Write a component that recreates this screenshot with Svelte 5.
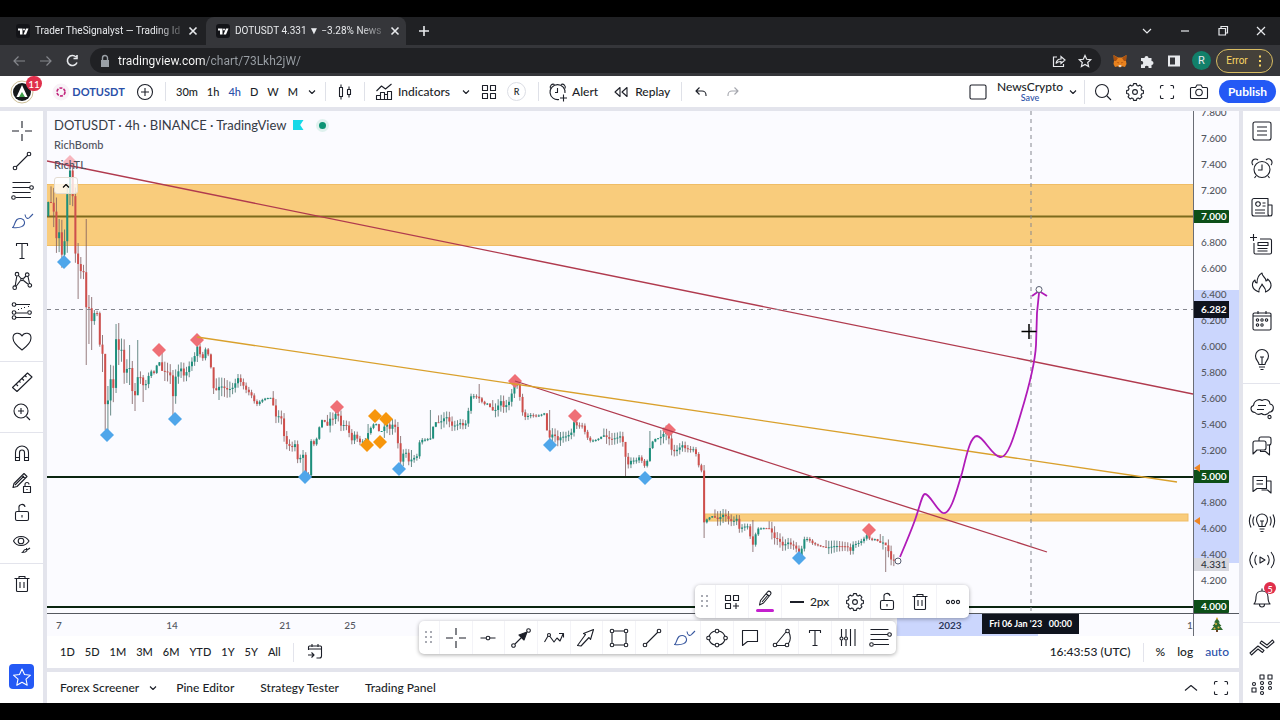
<script lang="ts">
  type Range = { label: string; active?: boolean };
  type Marker = { x: number; y: number; kind: "high" | "low" | "bomb" | "faded" };

  const ring = (x: number, y: number, r = 1.8) =>
    `M${x - r} ${y}a${r} ${r} 0 1 0 ${2 * r} 0a${r} ${r} 0 1 0 ${-2 * r} 0`;

  // Eight-toothed cog centred on the 28 x 28 icon grid.
  const cog = () => {
    const points: string[] = [];
    for (let tooth = 0; tooth < 8; tooth++) {
      for (const [offset, radius] of [[-0.28, 6.8], [-0.17, 8.5], [0.17, 8.5], [0.28, 6.8]]) {
        const angle = (tooth * Math.PI) / 4 + offset;
        points.push(`${(14 + radius * Math.cos(angle)).toFixed(2)} ${(14 + radius * Math.sin(angle)).toFixed(2)}`);
      }
    }
    return `M${points.join("L")}z`;
  };

  const icons: Record<string, string> = {
    cross: "M14 4v7M14 17v7M4 14h7M17 14h7",
    trend: "M8.5 19.5l11-11" + ring(7, 21) + ring(21, 7),
    fib: "M4.5 5.5h18M4.5 10.5h17M4.5 15.5h18M8 20.5h15" + ring(23.5, 10.5) + ring(5.5, 20.5),
    brush: "M4.5 20.5c2-.5 1.5-5 4.5-8 3-2 7-1 7.5 2.5.5 4-4 6.5-12 5.5zM17 7.5c.5 4 3 5 5 2.5l3-3",
    text: "M8.5 9V6.5h11V9M14 6.5v15M11.5 21.5h5",
    pattern:
      "M8.8 9L7.2 19M10.5 8.5l2.5 3M15.5 11.5l2.5-2.5M20 9.5l1.5 7M15.5 13.5l5 4M12.5 13.5L8 19.5" +
      ring(9, 7.2) + ring(19.2, 7.7) + ring(6.7, 20.7) + ring(21.8, 18.3) + ring(14, 12.5, 1.2),
    forecast:
      "M8 7.5h14M8 16h11M8 20.5h15M10 12.5h1M13 11.5h1M16 10.5h1M20 9.5h1" +
      ring(6, 7.5) + ring(6, 15.5) + ring(6, 20.5) + ring(21.5, 15.5),
    heart: "M14 23C10 20 5 15.5 5 11c0-6 7-6 9-2 2-4 9-4 9 2 0 4.5-5 9-9 12z",
    ruler: "M4.5 19.5l15-14.5 4.5 4-15 14.5zM8 16l2 2M11 13l1.5 1.5M14 10.5l2 2M17 7.5l1.5 1.5",
    zoom: ring(13, 13, 7) + "M18.5 18.5l3.5 3.5M13 10v6M10 13h6",
    magnet: "M7.5 21.5v-8a6.5 6.5 0 0 1 13 0v8h-4v-8a2.5 2.5 0 0 0-5 0v8zM7.5 18.5h4M16.5 18.5h4",
    pencilLock:
      "M5 18.5l1-4L16 4.5l3 3L9 17.5zM14 6.5l3 3M7 16l9-9M15.5 17.5h7v6h-7zM17 17.5v-2a2 2 0 0 1 4 0M19 20v1",
    lock: "M9 12.5h10a1.5 1.5 0 0 1 1.5 1.5v6a1.5 1.5 0 0 1-1.5 1.5H9A1.5 1.5 0 0 1 7.5 20v-6A1.5 1.5 0 0 1 9 12.5zM11 12.5V9a3 3 0 0 1 6-1M14 16v2.5",
    eye: "M5.5 12c3-6 12-6 15.5 0-3.5 6-12.5 6-15.5 0z" + ring(13, 12, 2.8) + "M14 23.5c2 0 1-3 3.5-3s2 3-3.5 3zM18.5 19c0 2 1 2 3.5 0",
    trash: "M6.5 8.5h15M11 8.5v-2h6v2M8.5 8.5v12a1 1 0 0 0 1 1h9a1 1 0 0 0 1-1v-12M12 12v6M16 12v6",
    star: "M14 6l2.5 5.5 6 .7-4.5 4 1.2 6-5.2-3-5.2 3 1.2-6-4.5-4 6-.7z",
    horizontal: "M6.5 14h5.5M16 14h5.5" + ring(14, 14),
    arrowLine: "M8 20l7-7" + ring(6.5, 21.5) + ring(21.5, 6.5),
    path: "M4.5 18l3.5-6M10 12.5l4 5.5 3-4 3 3 3-7M19 9.5h4.5v4" + ring(9, 11, 1.5),
    arrow: "M5.5 21.5l8-11-2-1 10-4-3 10-1.5-2-8 8.5z",
    rect: "M9 7h10M9 21h10M7 9v10M21 9v10" + ring(7, 7) + ring(21, 7) + ring(7, 21) + ring(21, 21),
    ellipse:
      "M6 12.5C7 9.5 9.5 7.5 12 7M16 7c2.5.5 5 2.5 6 5.5M22 15.5c-1 3-3.5 5-6 5.5M12 21c-2.5-.5-5-2.5-6-5.5" +
      ring(14, 7) + ring(14, 21) + ring(5.5, 14) + ring(22.5, 14),
    callout: "M6.5 6.5h15v11h-10l-5 4z",
    arc: "M8.5 19.5L18 8M8.5 21.5h9M21 8.5c2 4 1.5 8-.5 11" + ring(7, 21) + ring(19.5, 7) + ring(19, 21),
    bars: "M7.5 5v8M7.5 16v6M12 5v8M12 16v6M16.5 5v17M21 5v17" + ring(7.5, 14.5, 1.5) + ring(12, 14.5, 1.5),
    templates: "M7.5 7.5h5v5h-5zM15.5 7.5h5v5h-5zM7.5 15.5h5v5h-5zM18 15v6M15 18h6",
    pencil: "M8.5 20l1-4.5 7-8.5a1.5 1.5 0 0 1 3 2.5l-7 8.5zM15 8.5l3 2.5M11 17l6-7",
    gear: cog() + ring(14, 14, 2.4),
    dots: ring(9, 14, 1.6) + ring(14, 14, 1.6) + ring(19, 14, 1.6),
    down: "M11 12.5l3 3 3-3",
    up: "M8 16.5l6-5 6 5",
    upSmall: "M11 15.5l3-3 3 3",
    plusCircle: ring(14, 14, 7.5) + "M14 10v8M10 14h8",
    candles: "M8.5 9.5h3v9h-3zM10 6.5v3M10 18.5v3M16.5 11.5h3v5h-3zM18 8.5v3M18 16.5v3",
    indicators: "M6.5 13l5-5 4 3 6-5M6.5 21.5v-4h4v-3h4v2h3v-3h4v8zM10.5 17.5v4M14.5 16.5v5M17.5 16.5v5",
    grid: "M7.5 7.5h5v5h-5zM15.5 7.5h5v5h-5zM7.5 15.5h5v5h-5zM15.5 15.5h5v5h-5z",
    alertAdd: "M15 21.5A7.5 7.5 0 1 1 21 15M13.5 10v4.5H11M6.5 10.5a3 3 0 0 1 4-4M17 6.5a3 3 0 0 1 4 4M19.5 16.5v7M16 20h7",
    replay: "M13 9.5v9l-5-4.5zM20 9.5v9l-5-4.5z",
    undo: "M12.5 9.5L9 13l3.5 3.5M9 13h6a4 4 0 0 1 4 4v1",
    redo: "M15.5 9.5L19 13l-3.5 3.5M19 13h-6a4 4 0 0 0-4 4v1",
    layout: "M7.5 7h13A1.5 1.5 0 0 1 22 8.5v11a1.5 1.5 0 0 1-1.5 1.5h-13A1.5 1.5 0 0 1 6 19.5v-11A1.5 1.5 0 0 1 7.5 7z",
    search: ring(13, 13, 6.5) + "M18 18l4 4",
    full: "M10.5 7.5h-2a1 1 0 0 0-1 1v2M17.5 7.5h2a1 1 0 0 1 1 1v2M10.5 20.5h-2a1 1 0 0 1-1-1v-2M17.5 20.5h2a1 1 0 0 0 1-1v-2",
    camera: "M6.5 9.5h4l1.5-2.5h4l1.5 2.5h4a1 1 0 0 1 1 1v9a1 1 0 0 1-1 1h-15a1 1 0 0 1-1-1v-9a1 1 0 0 1 1-1z" + ring(14, 14.5, 3.3),
    goto: "M7.5 12V9a1 1 0 0 1 1-1h11a1 1 0 0 1 1 1v9a2 2 0 0 1-2 2h-3M7.5 11h13M11 6v3M17 6v3M7 17h6M10.5 14.5l2.5 2.5-2.5 2.5",
    watchlist: "M7 5h14a2 2 0 0 1 2 2v14a2 2 0 0 1-2 2H7a2 2 0 0 1-2-2V7a2 2 0 0 1 2-2zM9 10h10M9 14h10M9 18h10",
    alarm: ring(14, 14.5, 8) + "M14 9.5v5.5h-4M5 10a3.5 3.5 0 0 1 5-5M18 5a3.5 3.5 0 0 1 5 5M8 21l-1.5 2M20 21l1.5 2",
    news: "M6 5.5h14v15.5a2 2 0 0 0 2 2H6a2 2 0 0 1-2-2V7.5a2 2 0 0 1 2-2zM20 12h4v9a2 2 0 0 1-4 0M14.5 10h3M14.5 13h3M7 17h10M7 20h10" + ring(10, 11, 2.3),
    listAdd: "M12 8h10a1.5 1.5 0 0 1 1.5 1.5v12A1.5 1.5 0 0 1 22 23H7.5A1.5 1.5 0 0 1 6 21.5V12M5.5 3v7M2 6.5h7M10 11.5h10v3H10zM9.5 17.5h10M9.5 20h10",
    flame: "M11 23c-9-3-7-10-4-12 0 2 1 3 2 3 0-5 1-8 5-10 0 4 4 4 4 8 1 0 1.5-1 1.5-2 5 4 5 10-2 13 1-4-2-4-3.5-8-.5 3-4 4-3 8z",
    calendar:
      "M6.5 6h15A1.5 1.5 0 0 1 23 7.5v14a1.5 1.5 0 0 1-1.5 1.5h-15A1.5 1.5 0 0 1 5 21.5v-14A1.5 1.5 0 0 1 6.5 6zM5 9h18M10 4v3M18 4v3" +
      ring(9.5, 13, 1.2) + ring(14, 13, 1.2) + ring(18.5, 13, 1.2) + ring(9.5, 18, 1.2) + ring(14, 18, 1.2),
    bulb: "M11 19.5c0-3-3.5-4-3.5-8.5a6.5 6.5 0 0 1 13 0c0 4.5-3.5 5.5-3.5 8.5zM11 22h6M12.5 24.5h3M14 12v7M12 12h4",
    cloud: "M7 18.5c-5-.5-5-6-1.500-7C6 6.500 11 4.500 14 6.500c4-2.500 8 0 8 3.500 5 1 4 8-.5 8-2 3-6 3.500-8 1.500-2 1-5 1-6.500-1zM10 11.500h8M9 15.500h7" + ring(21.5, 23, 1.6),
    chats: "M5 11a2 2 0 0 1 2-2h9a2 2 0 0 1 2 2v5a2 2 0 0 1-2 2h-7l-4 4zM11 9V7a2 2 0 0 1 2-2h8a2 2 0 0 1 2 2v4a2 2 0 0 1-2 2h-2M21.5 13v10l-4-3.5h-5v-1.5",
    comments: "M5 6.5h13.5v12H9l-4 3zM18.5 11h4.5v12l-3.5-3h-6M8.5 10.5h6.5M8.5 14h6.5",
    ideas:
      "M11 18.5c0-2-2.5-3-2.5-7a5.5 5.5 0 0 1 11 0c0 4-2.5 5-2.5 7zM11.5 21h5M12.5 23.5h3M14 13v5M12 13h4M6 8.5c-1.5 3-1.5 6 0 9M3 6.5c-2 4-2 9 0 13M22 8.5c1.5 3 1.5 6 0 9M25 6.5c2 4 2 9 0 13",
    stream: "M12 11v6l5-3zM8.5 9c-2 3-2 7 0 10M5 6c-4 5-4 11 0 16M19.5 9c2 3 2 7 0 10M23 6c4 5 4 11 0 16",
    bell: "M6 20c2-2 2-4 2-7 0-8 12-8 12 0 0 3 0 5 2 7zM11.5 20.5a2.500 2.500 0 0 0 5 0M14 7V4.500",
    order: "M2 19l8-7 6 4.500-1.500 2-4.500-3.500-6.500 6zM12 9l1.500-2 5.500 4 5.500-5 1.500 2-7 6z",
    panel:
      "M12 5h4v4h-4zM20 5h4v4h-4zM4 18h4v4H4z" + ring(14, 13, 1.5) + ring(22, 13, 1.5) + ring(6, 14, 1.5) + ring(14, 18, 1.5) + ring(22, 18, 1.5) + ring(14, 23, 1.5),
  };

  const leftTools = [
    [["cross", "Cross"], ["trend", "Trend line"], ["fib", "Fib retracement"], ["brush", "Brush"], ["text", "Text"], ["pattern", "XABCD pattern"], ["forecast", "Long position"], ["heart", "Icons"]],
    [["ruler", "Measure"], ["zoom", "Zoom in"]],
    [["magnet", "Magnet mode"], ["pencilLock", "Stay in drawing mode"], ["lock", "Lock all drawings"], ["eye", "Hide all drawings"]],
    [["trash", "Remove drawings"]],
  ];
  const rightTools = [
    [["watchlist", "Watchlist"], ["alarm", "Alerts"], ["news", "News"], ["listAdd", "Data window"], ["flame", "Hotlists"], ["calendar", "Calendar"], ["bulb", "My ideas"]],
    [["cloud", "Minds"], ["chats", "Public chats"], ["comments", "Private chats"], ["ideas", "Ideas stream"], ["stream", "Streams"], ["bell", "Notifications"]],
    [["order", "Order panel"], ["panel", "DOM"]],
  ];
  const favorites = ["cross", "horizontal", "arrowLine", "path", "arrow", "rect", "trend", "brush", "ellipse", "callout", "arc", "text", "bars", "fib"];

  const intervals: Range[] = [
    { label: "30m" },
    { label: "1h" },
    { label: "4h", active: true },
    { label: "D" },
    { label: "W" },
    { label: "M" },
  ];
  const ranges = ["1D", "5D", "1M", "3M", "6M", "YTD", "1Y", "5Y", "All"];
  const prices = Array.from({ length: 20 }, (_, i) => (7.8 - i * 0.2).toFixed(3));
  const levels = ["7.000", "5.000", "4.000"];

  // Plot space: x runs 47..1193, y runs 111..613.
  const plotLeft = 47;
  const plotWidth = 1146;
  const dates = [
    { label: "7", x: 59 },
    { label: "14", x: 172 },
    { label: "21", x: 285 },
    { label: "25", x: 350 },
    { label: "2023", x: 950 },
    { label: "1", x: 1190 },
  ];

  const closes = `48,202 51,203 54,213 56,240 59,232 62,257 65,240 67,198 70,172 73,201 75,250 78,262 81,270
    84,271 87,318 89,307 92,322 95,310 98,314 100,348 103,355 106,422 108,400 111,377 114,392 116,340 119,352
    122,351 125,383 127,370 130,370 133,395 136,393 138,373 141,377 144,387 146,383 149,374 152,370 155,374
    157,364 160,362 163,375 166,370 168,374 171,377 174,408 176,372 179,373 182,369 185,383 187,366 190,364
    193,358 195,354 198,343 201,358 204,357 206,346 209,357 212,373 214,392 217,390 220,386 223,388 228,391
    233,389 238,380 241,380 246,388 251,393 256,404 261,400 266,398 272,398 275,417 281,417 284,437 287,446
    292,449 295,446 298,459 303,453 306,475 309,474 311,440 315,445 320,424 323,418 327,427 331,417 333,420
    337,412 341,427 346,426 351,440 355,432 359,441 365,440 369,430 373,424 377,424 380,435 383,428 387,425
    390,430 394,423 397,436 400,465 403,456 405,452 408,460 413,457 417,455 420,439 426,439 431,438 434,422
    440,423 446,417 452,427 456,427 462,424 467,421 470,395 473,395 478,396 484,404 487,403 493,411 497,410
    500,400 504,409 510,402 513,390 515,385 519,388 521,405 524,416 530,414 535,415 540,415 545,413 548,440
    551,436 554,434 557,442 561,438 567,438 572,434 573,419 577,424 582,424 585,431 589,440 595,440 600,438
    603,435 610,440 617,439 622,437 624,453 627,464 631,459 637,459 640,455 643,463 646,467 648,456 651,443
    655,439 660,438 665,433 668,431 670,450 675,453 680,449 684,446 690,448 695,448 698,463 702,471 704,522
    708,518 713,516 717,520 720,518 724,515 728,520 733,524 736,519 739,527 744,525 748,525 751,539 753,544
    755,535 758,528 765,528 771,529 773,538 778,540 783,547 788,544 793,548 796,546 799,555 801,552 803,538
    808,538 813,543 820,546 827,548 835,547 845,548 850,550 853,543 858,542 863,539 868,533 870,540 875,539
    880,543 884,543 888,550 890,560 894,562 896,564`
    .trim()
    .split(/\s+/)
    .map((pair) => pair.split(",").map(Number));

  // Candles whose wick is far longer than the usual one: index -> [high, low].
  const wicks: Record<number, [number, number]> = {
    8: [162, 205], 11: [243, 299], 14: [219, 365], 15: [295, 344], 16: [297, 350], 20: [335, 372],
    21: [355, 430], 22: [386, 432], 25: [324, 393], 26: [323, 365], 33: [340, 393], 30: [345, 385],
    31: [361, 404], 32: [383, 411], 35: [375, 402], 46: [370, 417], 55: [337, 362], 61: [370, 394],
    94: [450, 477], 106: [407, 424], 118: [424, 447], 130: [436, 470], 134: [450, 467], 141: [410, 440],
    159: [384, 403], 185: [410, 444], 213: [450, 476], 222: [431, 462], 242: [465, 538], 260: [520, 552],
    309: [547, 572],
  };

  const step = 2.71;
  const sample = (x: number) => {
    const next = closes.findIndex(([px]) => px >= x);
    if (next <= 0) return closes[next < 0 ? closes.length - 1 : 0][1];
    const [x0, y0] = closes[next - 1];
    const [x1, y1] = closes[next];
    return y0 + ((y1 - y0) * (x - x0)) / (x1 - x0);
  };
  const noise = (i: number) => (((i * 7919 + 13) * 104729) % 1000) / 1000;

  const candles = Array.from({ length: 313 }, (_, i) => {
    const x = 48.3 + i * step;
    const close = sample(x) + (noise(i) - 0.5) * 4;
    const open = i ? sample(x - step) + (noise(i - 1) - 0.5) * 4 : 216;
    const reach = x < 150 ? 16 : x < 230 ? 10 : 7;
    const top = Math.min(open, close);
    const bottom = Math.max(open, close);
    const [high, low] = wicks[i] ?? [top - noise(i + 50) * reach, bottom + noise(i + 90) * reach];
    return { x, top, height: Math.max(bottom - top, 1), high, low, rising: close < open };
  });

  const markers: Marker[] = [
    { x: 70, y: 162, kind: "faded" },
    { x: 64, y: 262, kind: "low" },
    { x: 107, y: 435, kind: "low" },
    { x: 159, y: 350, kind: "high" },
    { x: 175, y: 419, kind: "low" },
    { x: 197, y: 340, kind: "high" },
    { x: 305, y: 477, kind: "low" },
    { x: 337, y: 407, kind: "high" },
    { x: 367, y: 445, kind: "bomb" },
    { x: 375, y: 416, kind: "bomb" },
    { x: 380, y: 442, kind: "bomb" },
    { x: 386, y: 419, kind: "bomb" },
    { x: 399, y: 469, kind: "low" },
    { x: 515, y: 381, kind: "high" },
    { x: 550, y: 445, kind: "low" },
    { x: 575, y: 416, kind: "high" },
    { x: 645, y: 478, kind: "low" },
    { x: 669, y: 430, kind: "high" },
    { x: 799, y: 558, kind: "low" },
    { x: 869, y: 530, kind: "high" },
  ];
</script>

{#snippet icon(name: string)}
  <svg class="icon" viewBox="0 0 28 28" aria-hidden="true">
    <path d={icons[name]}></path>
    {#if name === "arrowLine"}<path class="solid" d="M20 8l-3 8-5-5z"></path>{/if}
  </svg>
{/snippet}

{#snippet favicon()}
  <svg class="favicon" viewBox="0 0 14 14" aria-hidden="true">
    <rect width="14" height="14" rx="3"></rect>
    <path d="M2 4.5h4.5v6h-2.5v-4H2zM10 4.5h2.5l-2.5 6H7.5z"></path>
    <circle cx="8" cy="5.5" r="1"></circle>
  </svg>
{/snippet}

{#snippet closeTab()}
  <button type="button" class="close" aria-label="Close tab">
    <svg viewBox="0 0 16 16"><path class="bold" d="M4.5 4.5l7 7M11.5 4.5l-7 7"></path></svg>
  </button>
{/snippet}

<div class="window">
  <header class="browser">
    <div class="tabs">
      <div class="tab">
        {@render favicon()}
        <span class="tab-title">Trader TheSignalyst — Trading Id</span>
        {@render closeTab()}
      </div>
      <div class="tab current">
        {@render favicon()}
        <span class="tab-title">DOTUSDT 4.331 ▼ −3.28% News</span>
        {@render closeTab()}
      </div>
      <button type="button" class="chrome-btn" aria-label="New tab">
        <svg viewBox="0 0 16 16"><path class="bold" d="M8 3v10M3 8h10"></path></svg>
      </button>
      <div class="window-controls">
        <button type="button" aria-label="Search tabs"><svg viewBox="0 0 16 16"><path d="M4 6l4 4 4-4"></path></svg></button>
        <button type="button" aria-label="Minimize"><svg viewBox="0 0 16 16"><path d="M4 8h8"></path></svg></button>
        <button type="button" aria-label="Restore"><svg viewBox="0 0 16 16"><path d="M4 5.5h6.5V12H4zM6 5.5v-2h6.5V10h-2"></path></svg></button>
        <button type="button" aria-label="Close"><svg viewBox="0 0 16 16"><path d="M4 4l8 8M12 4l-8 8"></path></svg></button>
      </div>
    </div>
    <div class="address">
      <button type="button" class="nav dim" aria-label="Back"><svg viewBox="0 0 16 16"><path d="M14 8H3M7.5 3.5L3 8l4.5 4.5"></path></svg></button>
      <button type="button" class="nav dim" aria-label="Forward"><svg viewBox="0 0 16 16"><path d="M2 8h11M8.5 3.5L13 8l-4.5 4.5"></path></svg></button>
      <button type="button" class="nav" aria-label="Reload"><svg viewBox="0 0 16 16"><path class="bold" d="M12 9.5a5 5 0 1 1-1-5.5M12 2v3.5H8.5"></path></svg></button>
      <div class="omnibox">
        <svg class="padlock" viewBox="0 0 16 16" aria-hidden="true"><path d="M4 7h8v7H4z"></path><path class="shackle" d="M5.5 7V5a2.5 2.5 0 0 1 5 0v2"></path></svg>
        <input type="text" aria-label="Address" value="tradingview.com/chart/73Lkh2jW/" />
        <button type="button" aria-label="Share"><svg viewBox="0 0 16 16"><path d="M6 4H2.5v9.5h10V11M5 10.5c.5-3 2.5-4.5 5-4.5V3.5L14 7l-4 3.5V8.5c-2 0-4 .5-5 2z"></path></svg></button>
        <button type="button" aria-label="Bookmark"><svg viewBox="0 0 16 16"><path d="M8 2.5l1.7 3.8 4 .4-3 2.8.9 4L8 11.4l-3.6 2.1.9-4-3-2.8 4-.4z"></path></svg></button>
      </div>
      <button type="button" class="ext" aria-label="Wallet extension">
        <svg viewBox="0 0 16 16">
          <path class="fox" d="M1.5 2l4.5 2.5h4L14.5 2l-.5 6 .5 3-1.5 3-3-.8-1 1H7l-1-1-3 .8L1.5 11 2 8z"></path>
          <path class="fox-dark" d="M1.5 2L6 5 4 8H2zM14.5 2L10 5l2 3h2zM4.5 9l2.5.5-.5 1zM11.5 9L9 9.5l.5 1z"></path>
          <path class="fox-chin" d="M6.5 12h3L9 14H7z"></path>
        </svg>
      </button>
      <button type="button" class="ext" aria-label="Extensions">
        <svg viewBox="0 0 16 16"><path class="fill" d="M2 5h3.5a2 2 0 1 1 4 0H12.5v3a2 2 0 1 1 0 4v3H9.5a1.8 1.8 0 1 0-3.5 0H2v-3.5a1.8 1.8 0 1 0 0-3.5z"></path></svg>
      </button>
      <button type="button" class="ext" aria-label="Side panel">
        <svg viewBox="0 0 16 16"><path class="fill" d="M2 2.5h12v11H2zM4 4.5v7h5v-7z"></path></svg>
      </button>
      <button type="button" class="profile" aria-label="Profile">R</button>
      <button type="button" class="error">Error
        <svg viewBox="0 0 16 16" aria-hidden="true"><path class="fill" d="M7 2.5h2v2H7zM7 7h2v2H7zM7 11.5h2v2H7z"></path></svg>
      </button>
    </div>
  </header>

  <div class="topbar">
    <button type="button" class="account" aria-label="Account">
      <svg viewBox="0 0 26 26" aria-hidden="true">
        <circle class="outer" cx="13" cy="13" r="11"></circle>
        <circle class="inner" cx="13" cy="13" r="9"></circle>
        <path class="peak" d="M13 6l5.5 12h-11z"></path>
        <path class="green" d="M13 13l3 5h-6z"></path>
      </svg>
      <span class="badge">11</span>
    </button>
    <div class="group symbol">
      <svg class="dot-logo" viewBox="0 0 18 18" aria-hidden="true"><circle class="halo" cx="9" cy="9" r="8.5"></circle><circle class="orbit" cx="9" cy="9" r="4"></circle></svg>
      <button type="button" class="ticker">DOTUSDT</button>
      <button type="button" aria-label="Compare">{@render icon("plusCircle")}</button>
    </div>
    <div class="group intervals">
      {#each intervals as interval (interval.label)}
        <button type="button" class:active={interval.active}>{interval.label}</button>
      {/each}
      <button type="button" class="slim" aria-label="More intervals">{@render icon("down")}</button>
    </div>
    <div class="group style">
      <button type="button" aria-label="Candles">{@render icon("candles")}</button>
    </div>
    <div class="group indicators">
      <button type="button">{@render icon("indicators")}Indicators</button>
      <button type="button" class="slim" aria-label="Favorite indicators">{@render icon("down")}</button>
      <button type="button" aria-label="Templates">{@render icon("grid")}</button>
      <button type="button" class="round">R</button>
    </div>
    <div class="group alert">
      <button type="button">{@render icon("alertAdd")}Alert</button>
      <button type="button">{@render icon("replay")}Replay</button>
    </div>
    <div class="history">
      <button type="button" aria-label="Undo">{@render icon("undo")}</button>
      <button type="button" aria-label="Redo" disabled>{@render icon("redo")}</button>
    </div>
    <div class="group layout">
      <button type="button" aria-label="Select layout">{@render icon("layout")}</button>
      <button type="button" class="layout-name">NewsCrypto<small>Save</small></button>
      <button type="button" class="slim" aria-label="Manage layouts">{@render icon("down")}</button>
    </div>
    <div class="actions">
      <button type="button" aria-label="Quick search">{@render icon("search")}</button>
      <button type="button" aria-label="Settings">{@render icon("gear")}</button>
      <button type="button" aria-label="Fullscreen">{@render icon("full")}</button>
      <button type="button" aria-label="Snapshot">{@render icon("camera")}</button>
    </div>
    <button type="button" class="publish">Publish</button>
  </div>

  <div class="workspace">
    <nav class="left" aria-label="Drawing tools">
      {#each leftTools as group, index (index)}
        <div class="tools">
          {#each group as [name, label] (name)}
            <button type="button" class:selected={name === "brush"} aria-label={label}>{@render icon(name)}</button>
          {/each}
        </div>
      {/each}
      <button type="button" class="favorite" aria-label="Show favorites">{@render icon("star")}</button>
    </nav>

    <main>
      <section class="chart">
        <div class="panes">
          <div class="plot">
            <svg viewBox="47 111 1146 502" preserveAspectRatio="none" role="img" aria-label="DOTUSDT price chart">
              <rect class="zone" x="46" y="184.5" width="1148" height="61"></rect>
              <rect class="zone" x="705" y="514" width="483" height="7"></rect>
              <path class="level in-zone" d="M47 216.5h1146"></path>
              <path class="level" d="M47 477h1146M47 607h1146"></path>
              {#each candles as candle, i (i)}
                <path class="wick" class:rising={candle.rising} d="M{candle.x} {candle.high}V{candle.low}"></path>
                <rect class="body" class:rising={candle.rising} x={candle.x - 1} y={candle.top} width="2" height={candle.height}></rect>
              {/each}
              {#each markers as marker (marker.x)}
                <path class="marker {marker.kind}" d="M{marker.x} {marker.y - 7}l7 7-7 7-7-7z"></path>
              {/each}
              <path class="trend" d="M47 161L1193 394M515 381L1047 552"></path>
              <path class="trend gold" d="M197 337L1177 482"></path>
              <path class="crosshair" d="M47 309.5H1193M1031 111V613"></path>
              <path
                class="stroke"
                d="M900 557C906 543 911 531 915 520C920 506 922 494 925 494C930 494 937 511 943 513C951 515 957 489 962 473C966 458 970 436 977 436C984 437 992 456 1000 457C1008 459 1015 433 1021 413C1028 390 1035 365 1036 345L1037 313L1039 293M1032 296l7-5 8 5"
              ></path>
              <circle class="handle" cx="898" cy="561" r="3"></circle>
              <circle class="handle" cx="1039" cy="289.5" r="3"></circle>
              <path class="cursor" d="M1021.5 331.5h15M1029 324v15"></path>
            </svg>
            <div class="legend">
              <h1>DOTUSDT · 4h · BINANCE · TradingView <i class="flag"></i><i class="live"></i></h1>
              <p>RichBomb</p>
              <p>RichTL</p>
              <button type="button" aria-label="Collapse legend">{@render icon("upSmall")}</button>
            </div>
          </div>
          <div class="price-axis">
            <div class="span"></div>
            <ul>
              {#each prices as price (price)}
                <li><span class:level-tag={levels.includes(price)}>{price}</span></li>
              {/each}
            </ul>
            <span class="tag cursor-price">6.282</span>
            <span class="tag last-price">4.331</span>
            <i class="bell-mark first"></i>
            <i class="bell-mark second"></i>
          </div>
        </div>
        <div class="time-axis">
          <div class="dates">
            <div class="span"></div>
            {#each dates as date (date.label)}
              <span class:year={date.label === "2023"} style:left="{((date.x - plotLeft) / plotWidth) * 100}%">{date.label}</span>
            {/each}
            <time>Fri 06 Jan '23 &nbsp; 00:00</time>
          </div>
          <div class="corner">
            <svg viewBox="0 0 16 16" aria-hidden="true">
              <path class="tree" d="M8 1l3 4.5H9.5L12.5 9H11l3 4H2l3-4H3.5l3-3.5H5z"></path>
              <path class="trunk" d="M7 13h2v2H7z"></path>
              <circle cx="7" cy="7" r="1"></circle><circle cx="9.5" cy="10.5" r="1"></circle><circle cx="5.5" cy="11.5" r="1"></circle><circle cx="8" cy="1.5" r="1"></circle>
            </svg>
          </div>
        </div>
        <div class="ranges">
          {#each ranges as range (range)}
            <button type="button">{range}</button>
          {/each}
          <span class="rule"></span>
          <button type="button" aria-label="Go to date">{@render icon("goto")}</button>
          <div class="scale">
            <button type="button">16:43:53 (UTC)</button>
            <span class="rule"></span>
            <button type="button">%</button>
            <button type="button">log</button>
            <button type="button" class="active">auto</button>
          </div>
        </div>

        <div class="floating properties" role="toolbar" aria-label="Drawing properties">
          <span class="grip"></span>
          <button type="button" aria-label="Template">{@render icon("templates")}</button>
          <button type="button" class="color" aria-label="Line color">{@render icon("pencil")}</button>
          <button type="button" class="thickness"><i></i>2px</button>
          <button type="button" aria-label="Settings">{@render icon("gear")}</button>
          <button type="button" aria-label="Lock">{@render icon("lock")}</button>
          <button type="button" aria-label="Remove">{@render icon("trash")}</button>
          <button type="button" aria-label="More">{@render icon("dots")}</button>
        </div>
        <div class="floating favorites" role="toolbar" aria-label="Favorite tools">
          <span class="grip"></span>
          {#each favorites as name (name)}
            <button type="button" class:selected={name === "brush"} aria-label={name}>{@render icon(name)}</button>
          {/each}
        </div>
      </section>

      <footer>
        <button type="button" class="screener">Forex Screener {@render icon("down")}</button>
        <button type="button">Pine Editor</button>
        <button type="button">Strategy Tester</button>
        <button type="button">Trading Panel</button>
        <div class="footer-end">
          <button type="button" aria-label="Open panel">{@render icon("up")}</button>
          <button type="button" aria-label="Maximize panel">{@render icon("full")}</button>
        </div>
      </footer>
    </main>

    <aside class="right">
      {#each rightTools as group, index (index)}
        <div class="tools">
          {#each group as [name, label] (name)}
            <button type="button" aria-label={label}>
              {@render icon(name)}
              {#if name === "bell"}<span class="badge">5</span>{/if}
            </button>
          {/each}
        </div>
      {/each}
    </aside>
  </div>
</div>

<style>
  :global(body) {
    margin: 0;
    background: #000;
  }
  .window {
    --ink: #1c1f28;
    --blue: #2a4fa8;
    --gutter: #e3e4ec;
    box-sizing: border-box;
    display: flex;
    flex-direction: column;
    min-height: 100vh;
    padding: 17px 0;
    overflow: hidden;
    color: var(--ink);
    font: 500 12px/16px "Trebuchet MS", Lato, sans-serif;
  }
  button {
    display: inline-flex;
    align-items: center;
    justify-content: center;
    padding: 0;
    border: 0;
    background: none;
    color: inherit;
    font: inherit;
    white-space: nowrap;
    cursor: pointer;
  }
  svg {
    display: block;
    flex: none;
  }
  .icon {
    width: 28px;
    height: 28px;
    fill: none;
    stroke: currentColor;
    stroke-width: 1.1;
    stroke-linejoin: round;
  }
  .icon .solid {
    fill: currentColor;
  }

  /* Browser chrome */
  .browser {
    background: #35363a;
    color: #e8eaed;
    font: 11px/16px "Segoe UI", Roboto, sans-serif;
  }
  .browser svg {
    width: 16px;
    height: 16px;
    fill: none;
    stroke: currentColor;
    stroke-width: 1.2;
  }
  .browser .bold {
    stroke-width: 1.6;
  }
  .browser .fill {
    fill: currentColor;
    fill-rule: evenodd;
    stroke: none;
  }
  .tabs {
    display: flex;
    align-items: center;
    height: 28px;
    padding-left: 6px;
    background: #202124;
  }
  .tab {
    box-sizing: border-box;
    display: flex;
    align-items: center;
    gap: 5px;
    width: 200px;
    height: 28px;
    padding: 0 5px 0 10px;
    border-radius: 8px 8px 0 0;
  }
  .tab.current {
    background: #35363a;
  }
  .tab-title {
    flex: 1;
    font-size: 10px;
    white-space: nowrap;
    mask-image: linear-gradient(90deg, #000 84%, #0004);
  }
  .browser .favicon {
    width: 14px;
    height: 14px;
    fill: #fff;
    stroke: none;
  }
  .favicon rect {
    fill: #131418;
  }
  .chrome-btn {
    width: 36px;
  }
  .window-controls {
    display: flex;
    margin-left: auto;
  }
  .window-controls button {
    width: 38px;
  }
  .address {
    display: flex;
    align-items: center;
    height: 31px;
    padding: 0 7px 0 5px;
  }
  .nav {
    width: 27px;
  }
  .dim {
    color: #85878c;
  }
  .omnibox {
    display: flex;
    flex: 1;
    align-items: center;
    height: 25px;
    margin: 0 5px 0 4px;
    padding: 0 3px 0 7px;
    border-radius: 13px;
    background: #202124;
  }
  .omnibox .padlock {
    fill: #9aa0a6;
    stroke: none;
  }
  .padlock .shackle {
    fill: none;
    stroke: #9aa0a6;
    stroke-width: 1.4;
  }
  .omnibox input {
    flex: 1;
    min-width: 0;
    margin-left: 5px;
    padding: 0;
    border: 0;
    outline: 0;
    background: linear-gradient(90deg, #fff 87px, #9aa0a6 87px);
    background-clip: text;
    color: transparent;
    font: 12px/20px "Segoe UI", Roboto, sans-serif;
  }
  .omnibox button {
    width: 26px;
  }
  .ext {
    width: 27px;
  }
  .ext .fox {
    fill: #e8821e;
    stroke: none;
  }
  .ext .fox-dark {
    fill: #a8500f;
    stroke: none;
  }
  .ext .fox-chin {
    fill: #e0d5c9;
    stroke: none;
  }
  .profile {
    width: 19px;
    height: 19px;
    margin: 0 5px;
    border-radius: 50%;
    background: #12806a;
  }
  .error {
    gap: 4px;
    width: 57px;
    height: 24px;
    box-sizing: border-box;
    padding-left: 5px;
    border: 1px solid #d9bd62;
    border-radius: 12px;
    background: #45413a;
    color: #fbd663;
    font-size: 10px;
  }

  /* Chart header */
  .topbar {
    display: flex;
    align-items: center;
    height: 31px;
    border-bottom: 4px solid var(--gutter);
    background: #fff;
  }
  .group {
    box-sizing: border-box;
    display: flex;
    align-items: center;
    height: 19px;
    border-right: 1px solid #dfe1e8;
  }
  .account {
    position: relative;
    width: 44px;
  }
  .account svg {
    width: 26px;
    height: 26px;
  }
  .account .outer {
    fill: #fff;
    stroke: #cdbf98;
  }
  .account .inner {
    fill: #15181a;
  }
  .account .peak {
    fill: #fff;
  }
  .account .green {
    fill: #3f9e4a;
  }
  .badge {
    position: absolute;
    display: grid;
    place-items: center;
    border-radius: 8px;
    background: #e0304c;
    color: #fff;
  }
  .account .badge {
    top: -3px;
    left: 26px;
    width: 16px;
    height: 15px;
    font-size: 10px;
  }
  .symbol {
    width: 122px;
    padding-left: 8px;
  }
  .dot-logo {
    width: 18px;
    height: 18px;
    margin-right: 3px;
  }
  .dot-logo .halo {
    fill: #f8f3f7;
  }
  .dot-logo .orbit {
    fill: none;
    stroke: #c2257c;
    stroke-width: 1.7;
    stroke-dasharray: 3 1.2;
  }
  .ticker {
    width: 51px;
    margin-right: 7px;
    color: var(--blue);
    font-weight: 700;
    font-size: 11px;
  }
  .intervals {
    gap: 9px;
    width: 160px;
    padding-left: 10px;
    font-size: 11px;
  }
  .slim .icon {
    margin: 0 -5px;
  }
  .intervals .slim {
    margin-left: -4px;
  }
  .active {
    color: var(--blue);
  }
  .style {
    justify-content: center;
    width: 39px;
  }
  .indicators {
    width: 174px;
    padding-left: 5px;
  }
  .indicators button:first-child {
    width: 87px;
    justify-content: flex-start;
  }
  .indicators .round {
    box-sizing: border-box;
    width: 19px;
    height: 19px;
    margin-left: 4px;
    border: 1px solid #dcdee5;
    border-radius: 50%;
    font-size: 9px;
  }
  .alert {
    gap: 9px;
    width: 143px;
    padding-left: 5px;
  }
  .history {
    display: flex;
    gap: 4px;
    margin-left: 5px;
  }
  .history button:disabled {
    color: #a4a6ad;
  }
  .layout {
    height: 24px;
    margin-left: auto;
    padding-right: 2px;
  }
  .layout-name {
    flex-direction: column;
    width: 66px;
    margin: 0 1px 0 5px;
    font-size: 12px;
    line-height: 13px;
  }
  .layout-name small {
    color: var(--blue);
    font-size: 9px;
    line-height: 10px;
  }
  .actions {
    display: flex;
    gap: 4px;
    padding: 0 6px 0 4px;
  }
  .publish {
    width: 57px;
    height: 23px;
    margin-right: 4px;
    border-radius: 12px;
    background: #2459f5;
    color: #fff;
    font-weight: 700;
  }

  /* Work area */
  .workspace {
    display: flex;
    flex: 1;
    gap: 4px;
    background: var(--gutter);
  }
  .left,
  .right {
    display: flex;
    flex: none;
    flex-direction: column;
    background: #fff;
  }
  .left {
    width: 43px;
  }
  .tools {
    display: flex;
    flex-direction: column;
  }
  .left .tools {
    padding: 5px 0;
  }
  .tools + .tools {
    border-top: 1px solid #e3e4ec;
  }
  .left .tools button {
    height: 30px;
  }
  .selected {
    color: #3b5aa0;
  }
  .favorite {
    width: 25px;
    height: 25px;
    margin: auto 0 14px 9px;
    border-radius: 4px;
    background: #2459f5;
    color: #fff;
  }
  .right {
    width: 37px;
  }
  .right .tools {
    padding: 5px 0;
  }
  .right .tools:first-child {
    padding-top: 1px;
  }
  .right .tools:last-child {
    padding: 7px 0 0;
  }
  .right button {
    position: relative;
    height: 38px;
  }
  .right .tools:last-child button {
    height: 36px;
  }
  .right .badge {
    top: 3px;
    left: 21px;
    width: 12px;
    height: 12px;
    font-size: 9px;
  }
  main {
    display: flex;
    flex: 1;
    flex-direction: column;
    gap: 4px;
    min-width: 0;
  }
  .chart {
    position: relative;
    display: flex;
    flex: 1;
    flex-direction: column;
    background: #fff;
  }
  .panes {
    display: flex;
    flex: 1;
    min-height: 0;
    border-bottom: 1px solid #555960;
    background: #fbfbff;
  }
  .plot {
    position: relative;
    flex: 1;
    min-width: 0;
    border-right: 1px solid #6a6d75;
  }
  .plot > svg {
    position: absolute;
    width: 100%;
    height: 100%;
  }
  .zone {
    fill: #f9cc7c;
    stroke: #efbd66;
  }
  .level {
    fill: none;
    stroke: #0a2510;
    stroke-width: 2;
  }
  .in-zone {
    stroke: #7d6a1c;
  }
  .wick {
    stroke: #7b5b5d;
    stroke-width: 0.8;
  }
  .wick.rising {
    stroke: #44706b;
  }
  .body {
    fill: #cf4f4c;
  }
  .body.rising {
    fill: #1c8f7c;
  }
  .marker.high {
    fill: #ef6f76;
  }
  .marker.low {
    fill: #4fa6ea;
  }
  .marker.bomb {
    fill: #f7960c;
  }
  .marker.faded {
    fill: #f7b6be;
  }
  .trend {
    fill: none;
    stroke: #b03a4e;
    stroke-width: 1.3;
  }
  .gold {
    stroke: #d9a02c;
  }
  .crosshair {
    fill: none;
    stroke: #85878f;
    stroke-dasharray: 4 4;
  }
  .stroke {
    fill: none;
    stroke: #b01bb8;
    stroke-width: 1.8;
  }
  .handle {
    fill: #fff;
    stroke: #565c70;
  }
  .cursor {
    fill: none;
    stroke: #000;
    stroke-width: 1.5;
  }
  .legend {
    position: relative;
    padding: 4px 7px;
    color: #50535e;
    font-size: 11px;
    line-height: 20px;
  }
  .legend h1 {
    display: flex;
    align-items: center;
    margin: 0;
    color: #363a45;
    font-weight: 400;
    font-size: 13px;
    line-height: 20px;
  }
  .legend p {
    margin: 0;
  }
  .legend button {
    width: 24px;
    height: 17px;
    margin-top: 2px;
    overflow: hidden;
    border: 1px solid #e3dcd2;
    border-radius: 3px;
    background: #fffc;
    color: #000;
  }
  .flag {
    width: 11px;
    height: 10px;
    margin-left: 6px;
    background: #16d9e8;
    clip-path: polygon(0 0, 100% 0, 70% 50%, 100% 100%, 0 100%);
  }
  .live {
    width: 7px;
    height: 7px;
    margin-left: 12px;
    border: 3px solid #dff1ee;
    border-radius: 50%;
    background: #0c9474;
  }
  .price-axis {
    position: relative;
    width: 45px;
    color: #555862;
    font-size: 10px;
  }
  .price-axis ul {
    position: absolute;
    inset: 0;
    margin: 0;
    padding: 0;
    overflow: hidden;
    list-style: none;
  }
  .price-axis li {
    display: flex;
    align-items: center;
    height: 26px;
  }
  .price-axis li:first-child {
    margin-top: -12px;
  }
  .price-axis li span,
  .tag {
    box-sizing: border-box;
    width: 35px;
    padding-left: 7px;
    line-height: 13px;
  }
  .price-axis .level-tag {
    border-radius: 0 1px 1px 0;
    background: #0d4f18;
    color: #fff;
    font-weight: 700;
  }
  .tag {
    position: absolute;
    left: 0;
  }
  .cursor-price {
    top: 190px;
    background: #0f131d;
    color: #fff;
    font-weight: 700;
    line-height: 17px;
  }
  .last-price {
    top: 447px;
    background: #d6d7de;
    color: #30333d;
  }
  .price-axis .span {
    position: absolute;
    top: 179px;
    right: 0;
    left: 0;
    height: 273px;
    background: #cbd6fd;
  }
  .bell-mark {
    position: absolute;
    left: 0;
    width: 6px;
    height: 8px;
    background: #ee8523;
    clip-path: polygon(0 50%, 100% 0, 100% 100%);
  }
  .first {
    top: 353px;
  }
  .second {
    top: 406px;
  }
  .time-axis {
    display: flex;
    height: 22px;
    background: #fbfbff;
    color: #555862;
    font-size: 10px;
  }
  .dates {
    position: relative;
    flex: 1;
    overflow: hidden;
    border-right: 1px solid #6a6d75;
  }
  .dates > span {
    position: absolute;
    top: 3px;
    translate: -50% 0;
  }
  .dates .year {
    color: #2e3a5c;
    font-weight: 700;
  }
  .dates .span {
    position: absolute;
    left: 74.2%;
    width: 12.3%;
    height: 100%;
    background: #cbd6fd;
  }
  .dates time {
    position: absolute;
    left: 81.6%;
    width: 97px;
    height: 20px;
    background: #0f131d;
    color: #fff;
    font-weight: 700;
    font-size: 9px;
    line-height: 20px;
    text-align: center;
  }
  .corner {
    display: grid;
    place-items: center;
    width: 45px;
  }
  .corner svg {
    width: 16px;
    height: 16px;
    fill: #e3b341;
  }
  .tree {
    fill: #2f6b2e;
  }
  .trunk {
    fill: #6d4424;
  }
  .ranges {
    display: flex;
    align-items: center;
    gap: 10px;
    height: 32px;
    padding: 0 10px 0 13px;
    font-size: 11px;
  }
  .rule {
    width: 1px;
    height: 19px;
    background: #e3e4ec;
  }
  .ranges > .rule {
    margin: 0 2px;
  }
  .ranges .icon {
    margin: 0 -5px;
  }
  .scale {
    display: flex;
    align-items: center;
    gap: 12px;
    margin-left: auto;
    font-size: 12px;
  }
  .floating {
    position: absolute;
    display: flex;
    align-items: stretch;
    border-radius: 5px;
    background: #fff;
    box-shadow: 0 1px 4px #0005;
  }
  .floating button {
    flex: 1;
    min-width: 0;
    border-left: 1px solid #f3f3f7;
  }
  .grip {
    width: 8px;
    height: 13px;
    margin: auto 6px;
    background: radial-gradient(circle at 1px 1px, #a9abb3 1px, transparent 1px) 0 0 / 5px 5px;
  }
  .properties {
    bottom: 50px;
    left: 648px;
    width: 274px;
    height: 33px;
  }
  .favorites {
    bottom: 14px;
    left: 372px;
    width: 477px;
    height: 33px;
  }
  .color {
    position: relative;
  }
  .color::after {
    position: absolute;
    right: 7px;
    bottom: 6px;
    left: 7px;
    height: 3px;
    border-radius: 2px;
    background: #c41fce;
    content: "";
  }
  .color .icon {
    margin-top: -6px;
  }
  .floating .thickness {
    flex: 0 0 57px;
    gap: 6px;
  }
  .thickness i {
    width: 14px;
    height: 2px;
    background: var(--ink);
  }
  footer {
    display: flex;
    align-items: center;
    gap: 26px;
    height: 31px;
    padding: 0 4px 0 13px;
    background: #fff;
    font-size: 12px;
  }
  .screener {
    margin-right: -17px;
  }
  .footer-end {
    display: flex;
    gap: 2px;
    margin-left: auto;
  }
</style>
